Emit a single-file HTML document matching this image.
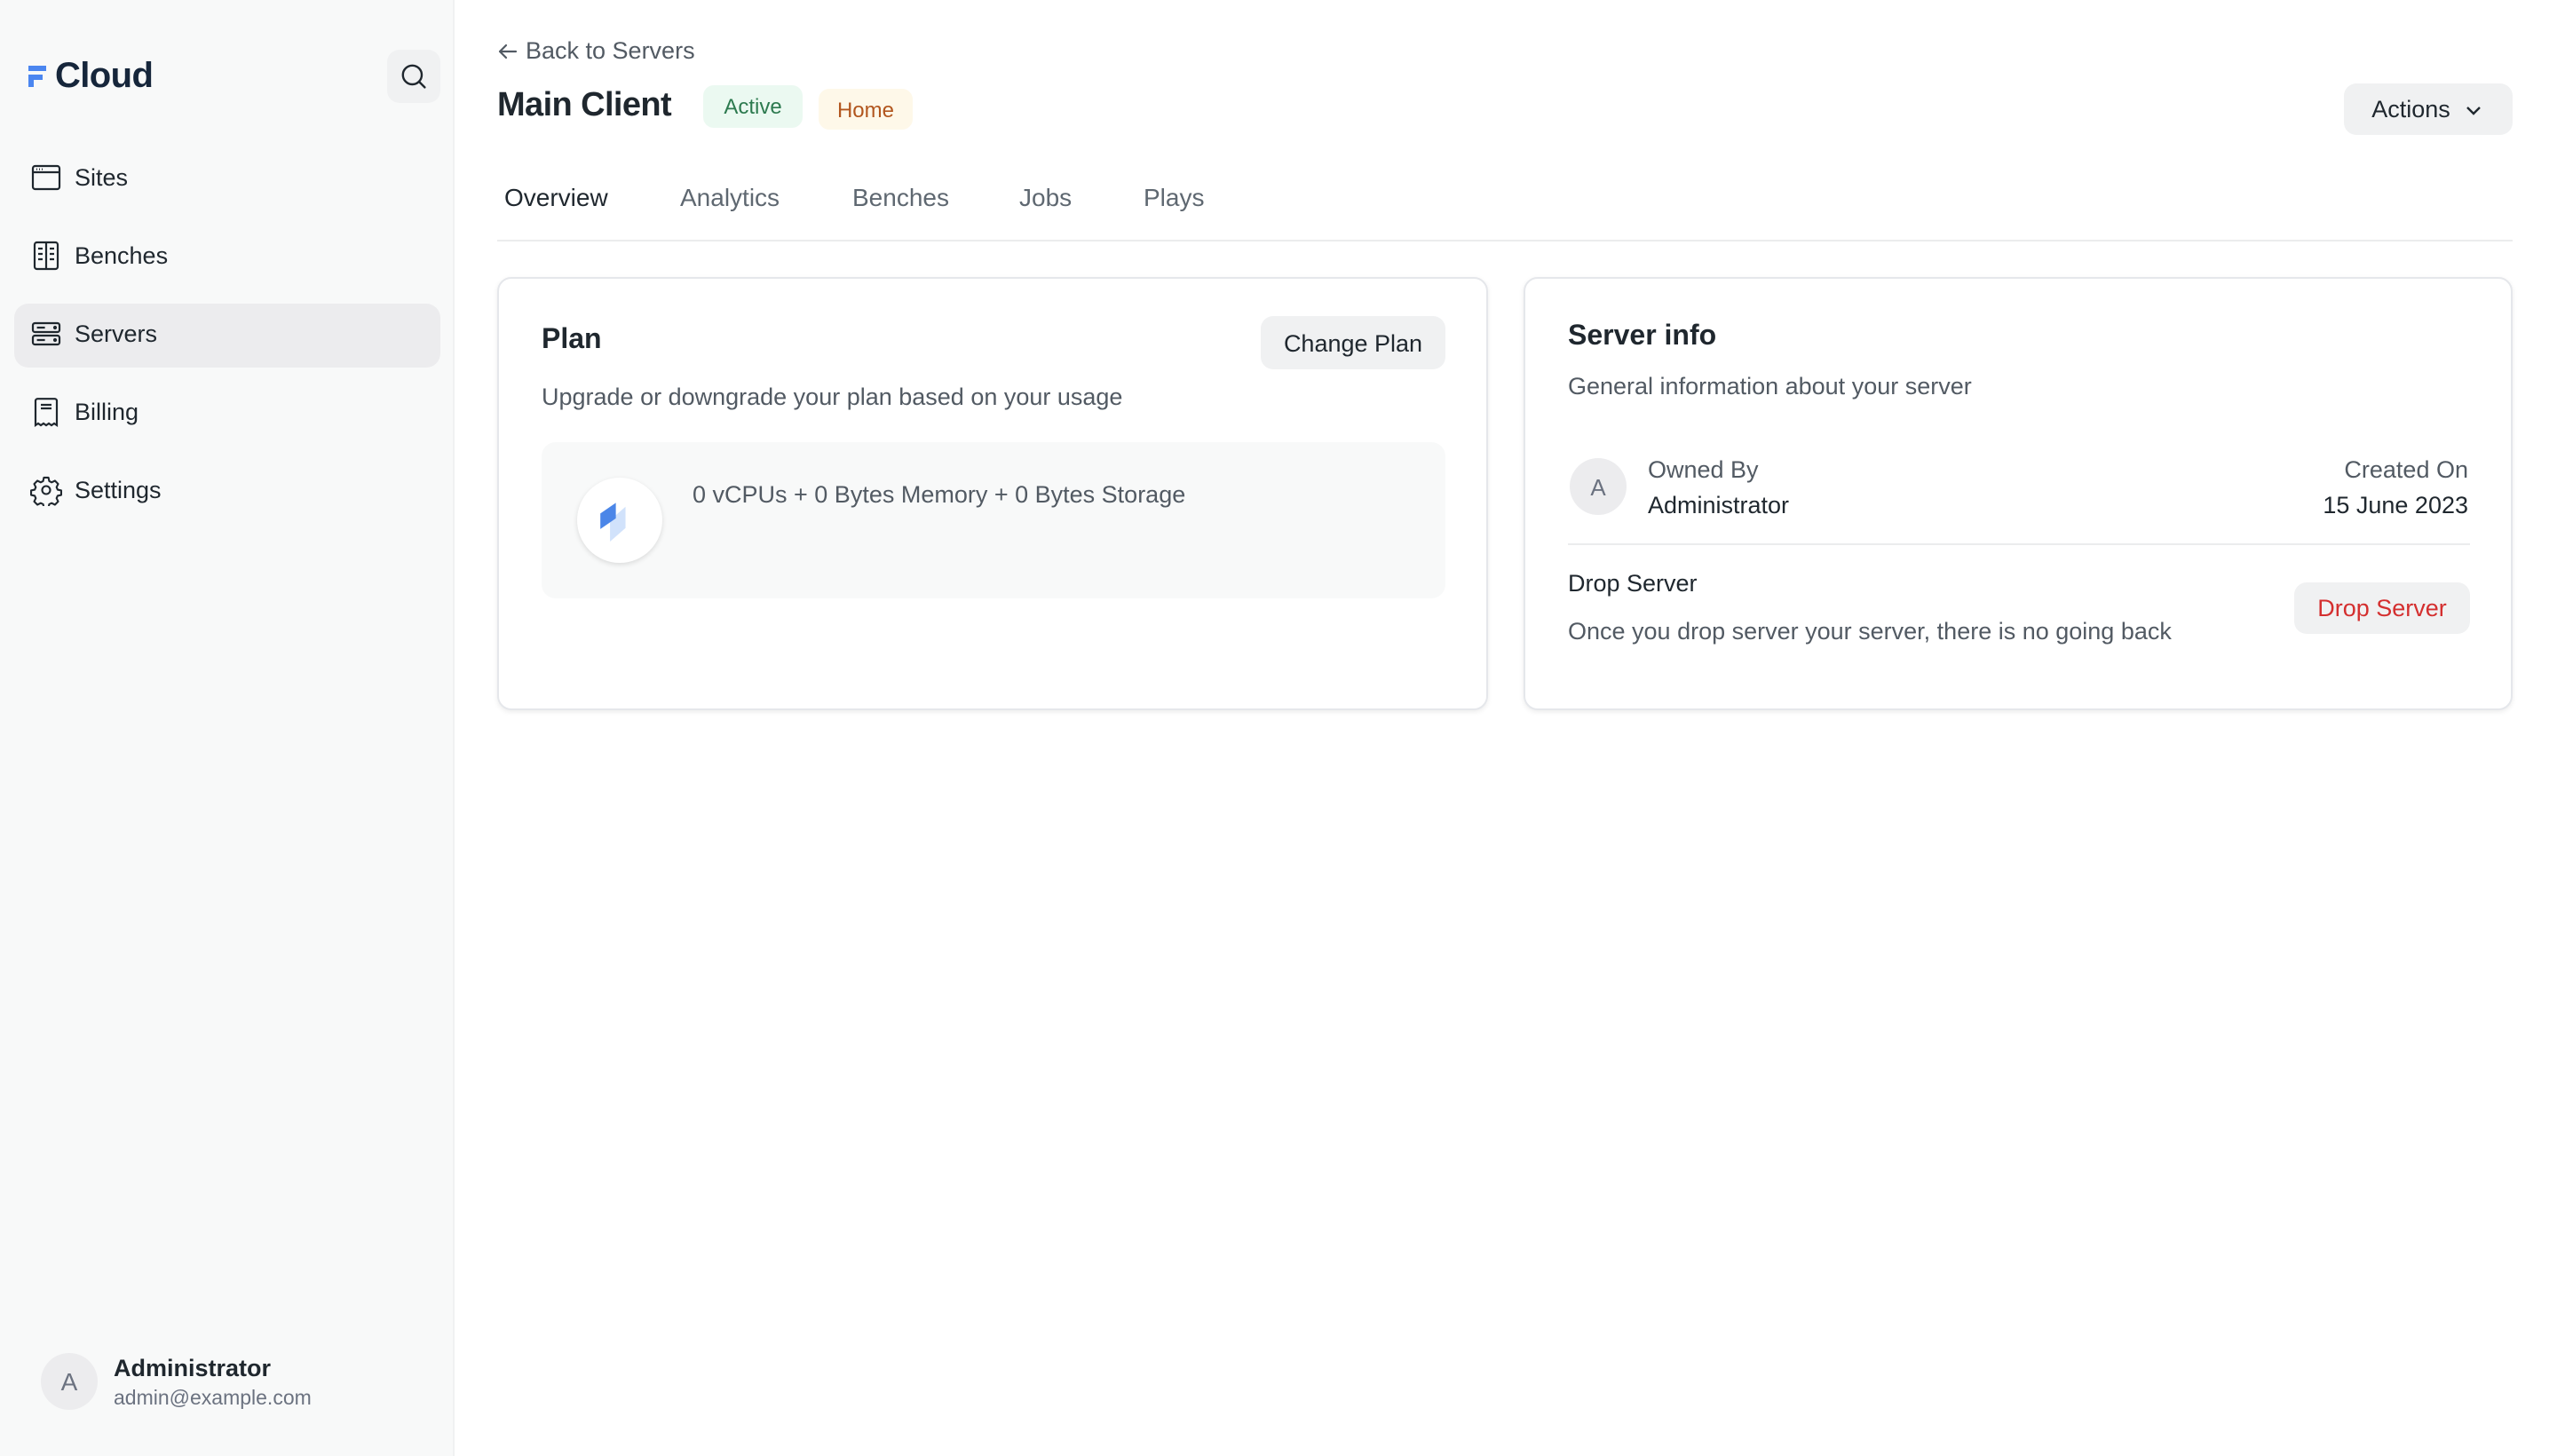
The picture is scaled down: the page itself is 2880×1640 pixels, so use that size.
<!DOCTYPE html>
<html><head><meta charset="utf-8"><style>
*{box-sizing:border-box;margin:0;padding:0}
html,body{width:2880px;height:1640px;overflow:hidden;background:#fff}
#s{position:absolute;left:0;top:0;width:1440px;height:820px;transform:scale(2);transform-origin:0 0;font-family:"Liberation Sans",sans-serif;color:#1f272e}
.a{position:absolute;white-space:nowrap}
.side{position:absolute;left:0;top:0;width:256px;height:820px;background:#f8f9f9;border-right:1px solid #f0f1f2}
.nav{position:absolute;left:42px;font-size:13.5px;color:#1f272e;transform:translateY(-50%)}
.ic{position:absolute;left:17px;width:18px;height:18px;transform:translateY(-50%)}
.gray{color:#525a63}
.btn{position:absolute;background:#f0f1f2;border-radius:7px;font-size:14px;display:flex;align-items:center;justify-content:center}
.card{position:absolute;top:156px;height:244px;border:1px solid #e5e7eb;border-radius:8px;box-shadow:0 1px 3px rgba(0,0,0,.08);background:#fff}
.tab{position:absolute;top:111px;transform:translateY(-50%);font-size:14px;color:#5f6871}
</style></head><body><div id="s">
<div class="side">
  <svg class="a" style="left:16px;top:37px" width="10" height="12" viewBox="0 0 10 12"><rect x="0" y="0" width="10" height="3" fill="#4b86f0"/><rect x="0" y="5" width="3" height="7" fill="#4b86f0"/><rect x="0" y="5" width="8" height="3" fill="#4b86f0"/></svg>
  <div class="a" style="left:31px;top:32px;font-size:20px;font-weight:bold;color:#16263b;letter-spacing:-0.3px">Cloud</div>
  <div class="btn" style="left:218px;top:28px;width:30px;height:30px;border-radius:7px">
    <svg width="16" height="16" viewBox="0 0 16 16" fill="none" stroke="#1f272e" stroke-width="1.2"><circle cx="7.2" cy="7.2" r="5.3"/><path d="M11 11l3.2 3.2" stroke-linecap="round"/></svg></div>
  <div class="a" style="left:8px;top:171px;width:240px;height:36px;background:#ececee;border-radius:8px"></div>
  <svg class="ic" style="top:100px" viewBox="0 0 18 18" fill="none" stroke="#1f272e" stroke-width="1.1"><rect x="1.5" y="2.5" width="15" height="13" rx="1.3"/><path d="M1.5 6h15"/><path d="M3.5 4.3h.5M5 4.3h.5M6.5 4.3h.5" stroke-width="1"/></svg>
  <div class="nav" style="top:100px">Sites</div>
  <svg class="ic" style="top:144px" viewBox="0 0 18 18" fill="none" stroke="#1f272e" stroke-width="1.1"><rect x="2.5" y="1.5" width="13" height="15" rx="1.3"/><path d="M9 1.5v15M4.5 5h2.5M4.5 8h2.5M4.5 11h2.5M11 5h2.5M11 8h2.5M11 11h2.5"/></svg>
  <div class="nav" style="top:144px">Benches</div>
  <svg class="ic" style="top:188px" viewBox="0 0 18 18" fill="none" stroke="#1f272e" stroke-width="1.1"><rect x="1.5" y="3" width="15" height="5" rx="1.2"/><rect x="1.5" y="10" width="15" height="5" rx="1.2"/><path d="M3.8 5.5h4.5M3.8 12.5h4.5"/><circle cx="14" cy="5.5" r=".5" fill="#1f272e"/><circle cx="14" cy="12.5" r=".5" fill="#1f272e"/></svg>
  <div class="nav" style="top:188px">Servers</div>
  <svg class="ic" style="top:232px" viewBox="0 0 18 18" fill="none" stroke="#1f272e" stroke-width="1.1"><path d="M3 16.5V2.8c0-.7.5-1.2 1.2-1.2h9.6c.7 0 1.2.5 1.2 1.2v13.7l-1.5-1-1.5 1-1.5-1-1.5 1-1.5-1-1.5 1-1.5-1z"/><path d="M6 5h6M6 7h6"/></svg>
  <div class="nav" style="top:232px">Billing</div>
  <svg class="ic" style="top:276px" viewBox="0 0 24 24" fill="none" stroke="#1f272e" stroke-width="1.4" stroke-linejoin="round"><path d="M10.3 2.6h3.4l.6 2.7 1.8.9 2.5-1.2 2.4 2.4-1.2 2.5.8 1.8 2.7.6v3.4l-2.7.6-.8 1.8 1.2 2.5-2.4 2.4-2.5-1.2-1.8.8-.6 2.7h-3.4l-.6-2.7-1.8-.8-2.5 1.2-2.4-2.4 1.2-2.5-.8-1.8-2.7-.6v-3.4l2.7-.6.8-1.8-1.2-2.5 2.4-2.4 2.5 1.2 1.8-.9z"/><circle cx="12" cy="12" r="3"/></svg>
  <div class="nav" style="top:276px">Settings</div>
  <div class="a" style="left:23px;top:762px;width:32px;height:32px;border-radius:50%;background:#ececee;color:#6b7280;font-size:14px;display:flex;align-items:center;justify-content:center">A</div>
  <div class="a" style="left:64px;top:763px;font-size:13.5px;font-weight:bold">Administrator</div>
  <div class="a" style="left:64px;top:782px;font-size:11.5px;color:#6b7280">admin@example.com</div>
</div>

<svg class="a" style="left:280px;top:23px" width="12" height="12" viewBox="0 0 12 12" fill="none" stroke="#525a63" stroke-width="1.1" stroke-linecap="round" stroke-linejoin="round"><path d="M10.5 6H1.5M5 2.5L1.5 6 5 9.5"/></svg>
<div class="a gray" style="left:296px;top:21px;font-size:13.5px">Back to Servers</div>
<div class="a" style="left:280px;top:49px;font-size:19px;font-weight:bold;letter-spacing:-0.3px">Main Client</div>
<div class="a" style="left:396px;top:48px;width:56px;height:24px;border-radius:6px;background:#ebf9f1;color:#2d7a4f;font-size:12px;display:flex;align-items:center;justify-content:center">Active</div>
<div class="a" style="left:461px;top:50px;width:53px;height:23px;border-radius:6px;background:#fef8e9;color:#b2561e;font-size:12px;display:flex;align-items:center;justify-content:center">Home</div>
<div class="btn" style="left:1320px;top:47px;width:95px;height:29px;font-size:13.5px">Actions&nbsp;&nbsp;<svg width="12" height="12" viewBox="0 0 12 12" fill="none" stroke="#1f272e" stroke-width="1.2"><path d="M2.5 4.5L6 8l3.5-3.5"/></svg></div>

<div class="tab" style="left:284px;color:#1f272e">Overview</div>
<div class="tab" style="left:383px">Analytics</div>
<div class="tab" style="left:480px">Benches</div>
<div class="tab" style="left:574px">Jobs</div>
<div class="tab" style="left:644px">Plays</div>
<div class="a" style="left:280px;top:135px;width:1135px;height:1px;background:#ebeced"></div>

<div class="card" style="left:280px;width:558px">
  <div class="a" style="left:24px;top:26px;font-size:16px;font-weight:bold">Plan</div>
  <div class="btn" style="left:429px;top:21px;width:104px;height:30px;font-size:13.5px">Change Plan</div>
  <div class="a gray" style="left:24px;top:59px;font-size:13.5px">Upgrade or downgrade your plan based on your usage</div>
  <div class="a" style="left:24px;top:92px;width:509px;height:88px;background:#f8f9f9;border-radius:8px">
    <div class="a" style="left:20px;top:20px;width:48px;height:48px;border-radius:50%;background:#fff;box-shadow:0 1px 3px rgba(0,0,0,.12)">
      <svg class="a" style="left:12px;top:12px" width="24" height="24" viewBox="0 0 22 22"><path d="M6 11l8-7v11l-8 7z" fill="#d1e2fb"/><path d="M1 7.5l8-5.5v8l-8 5.5z" fill="#4b86e8"/></svg>
    </div>
    <div class="a gray" style="left:85px;top:22px;font-size:13.5px">0 vCPUs + 0 Bytes Memory + 0 Bytes Storage</div>
  </div>
</div>

<div class="card" style="left:858px;width:557px">
  <div class="a" style="left:24px;top:24px;font-size:16px;font-weight:bold">Server info</div>
  <div class="a gray" style="left:24px;top:53px;font-size:13.5px">General information about your server</div>
  <div class="a" style="left:25px;top:101px;width:32px;height:32px;border-radius:50%;background:#ececee;color:#6b7280;font-size:13px;display:flex;align-items:center;justify-content:center">A</div>
  <div class="a gray" style="left:69px;top:100px;font-size:13.5px">Owned By</div>
  <div class="a" style="left:69px;top:120px;font-size:13.5px">Administrator</div>
  <div class="a gray" style="right:24px;top:100px;font-size:13.5px">Created On</div>
  <div class="a" style="right:24px;top:120px;font-size:13.5px">15 June 2023</div>
  <div class="a" style="left:24px;top:149px;width:508px;height:1px;background:#ebeced"></div>
  <div class="a" style="left:24px;top:164px;font-size:13.5px">Drop Server</div>
  <div class="a gray" style="left:24px;top:191px;font-size:13.5px">Once you drop server your server, there is no going back</div>
  <div class="btn" style="left:433px;top:171px;width:99px;height:29px;color:#d42f2f;font-size:13.5px">Drop Server</div>
</div>
</div></body></html>
